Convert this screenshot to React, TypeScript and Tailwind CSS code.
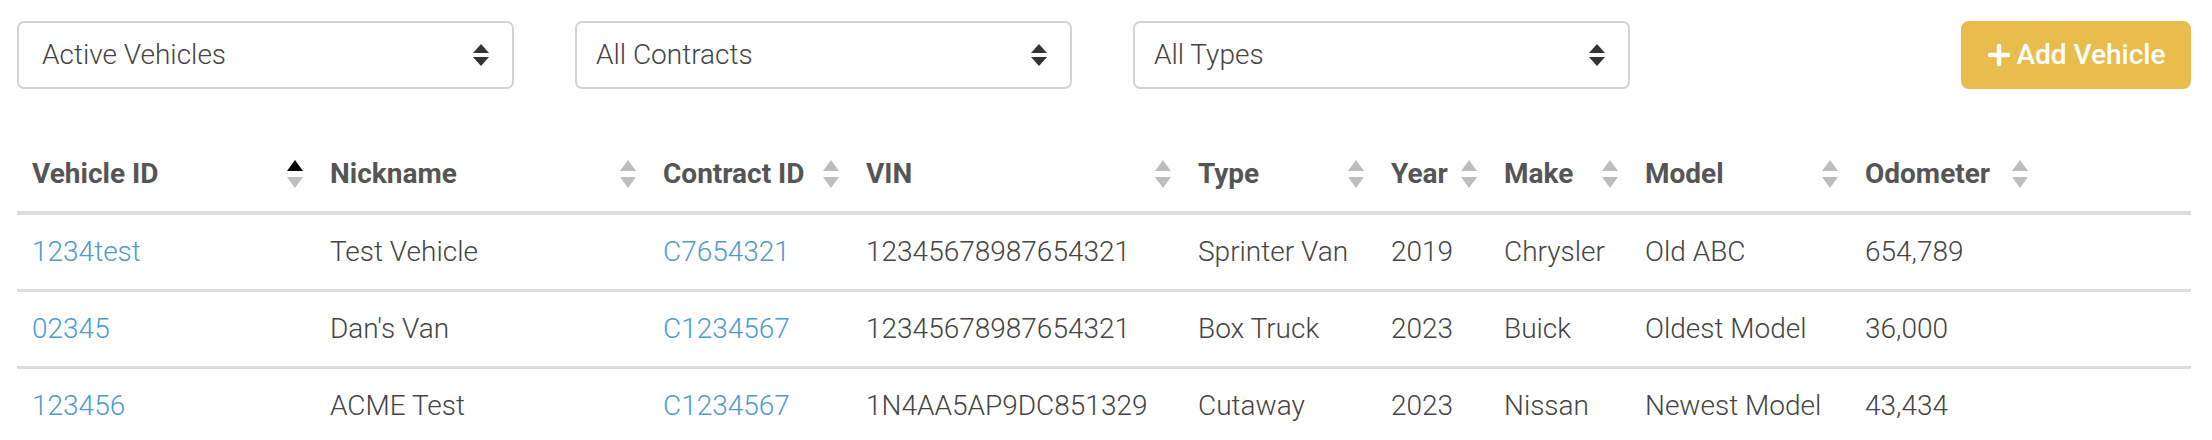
import React from "react";

const rows = [
  { id: "1234test", nickname: "Test Vehicle", contract: "C7654321", vin: "12345678987654321", type: "Sprinter Van", year: "2019", make: "Chrysler", model: "Old ABC", odometer: "654,789" },
  { id: "02345", nickname: "Dan's Van", contract: "C1234567", vin: "12345678987654321", type: "Box Truck", year: "2023", make: "Buick", model: "Oldest Model", odometer: "36,000" },
  { id: "123456", nickname: "ACME Test", contract: "C1234567", vin: "1N4AA5AP9DC851329", type: "Cutaway", year: "2023", make: "Nissan", model: "Newest Model", odometer: "43,434" },
];

const columns = [
  { label: "Vehicle ID", width: "w-[298px]" },
  { label: "Nickname", width: "w-[333px]" },
  { label: "Contract ID", width: "w-[203px]" },
  { label: "VIN", width: "w-[332px]" },
  { label: "Type", width: "w-[193px]" },
  { label: "Year", width: "w-[113px]" },
  { label: "Make", width: "w-[141px]" },
  { label: "Model", width: "w-[220px]" },
  { label: "Odometer", width: "w-[190px]" },
];

function SortIcon({ active }: { active?: boolean }) {
  return (
    <svg width="16" height="28" viewBox="0 0 16 28" className="absolute right-[12px] top-1/2 -translate-y-1/2">
      <polygon points="0,11 8,0 16,11" fill={active ? "#000000" : "#bdbdbd"} />
      <polygon points="0,17 16,17 8,28" fill="#bdbdbd" />
    </svg>
  );
}

function FilterSelect({ label, first }: { label: string; first?: boolean }) {
  return (
    <div
      className={`flex h-[68px] w-[497px] items-center justify-between rounded-[7px] border-2 border-[#d4d4d4] bg-white pr-[23px] text-[28px] font-light text-[#444444] ${first ? "pl-[23px]" : "pl-[19px]"}`}
    >
      <span>{label}</span>
      <svg width="16" height="22" viewBox="0 0 16 22">
        <polygon points="0,9 8,0 16,9" fill="#333333" />
        <polygon points="0,13 16,13 8,22" fill="#333333" />
      </svg>
    </div>
  );
}

export default function App() {
  return (
    <div className="min-h-[440px] bg-white pl-[17px] pr-[21px] pt-[21px] font-['Roboto',sans-serif]">
      <div className="flex items-center gap-[61px]">
        <FilterSelect label="Active Vehicles" first />
        <FilterSelect label="All Contracts" />
        <FilterSelect label="All Types" />
        <button
          type="button"
          className="ml-auto flex h-[68px] w-[230px] items-center justify-center gap-[6px] rounded-[8px] bg-[#e8bd4d] text-[28px] font-medium text-white"
        >
          <svg width="24" height="24" viewBox="0 0 24 24">
            <path d="M12 3v18M3 12h18" stroke="white" strokeWidth="4.5" strokeLinecap="round" />
          </svg>
          Add Vehicle
        </button>
      </div>

      <table className="mt-[48px] w-full table-fixed border-collapse text-left text-[28px] font-light leading-[40px] text-[#444444]">
        <thead>
          <tr className="border-b-[4px] border-[#dddddd]">
            {columns.map((col, i) => (
              <th key={col.label} className={`relative ${col.width} px-[15px] py-[17px] font-bold text-[#555555]`}>
                {col.label}
                <SortIcon active={i === 0} />
              </th>
            ))}
            <th />
          </tr>
        </thead>
        <tbody>
          {rows.map((row, i) => (
            <tr key={row.id} className={i < rows.length - 1 ? "border-b-[3px] border-[#dddddd]" : ""}>
              <td className="px-[15px] py-[17px] text-[#4d9bd0]">{row.id}</td>
              <td className="px-[15px] py-[17px]">{row.nickname}</td>
              <td className="px-[15px] py-[17px] text-[#4d9bd0]">{row.contract}</td>
              <td className="px-[15px] py-[17px]">{row.vin}</td>
              <td className="px-[15px] py-[17px]">{row.type}</td>
              <td className="px-[15px] py-[17px]">{row.year}</td>
              <td className="px-[15px] py-[17px]">{row.make}</td>
              <td className="px-[15px] py-[17px]">{row.model}</td>
              <td className="px-[15px] py-[17px]">{row.odometer}</td>
              <td />
            </tr>
          ))}
        </tbody>
      </table>
    </div>
  );
}
